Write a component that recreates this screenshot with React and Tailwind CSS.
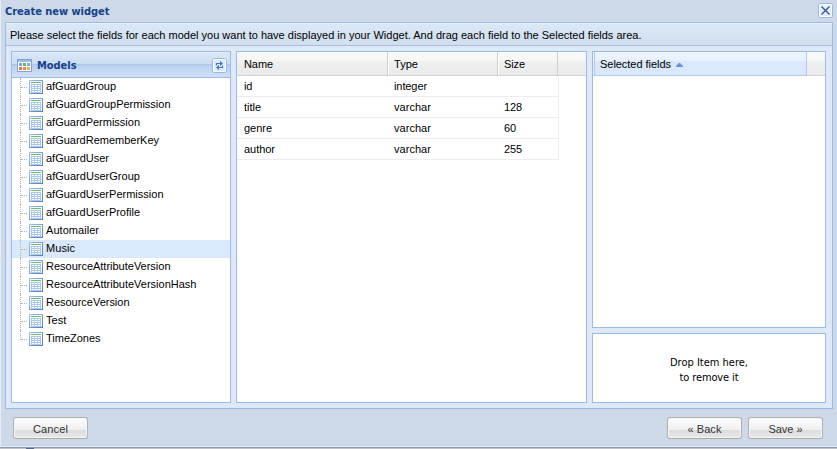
import React from 'react';

const models = [
  ['afGuardGroup', 70], ['afGuardGroupPermission', 124.5], ['afGuardPermission', 94], ['afGuardRememberKey', 113],
  ['afGuardUser', 63], ['afGuardUserGroup', 94], ['afGuardUserPermission', 117.5], ['afGuardUserProfile', 94],
  ['Automailer', 53], ['Music', 29], ['ResourceAttributeVersion', 124.5], ['ResourceAttributeVersionHash', 150.5],
  ['ResourceVersion', 83.5], ['Test', 20.5], ['TimeZones', 54.5],
];

const fields = [
  ['id', 'integer', ''],
  ['title', 'varchar', '128'],
  ['genre', 'varchar', '60'],
  ['author', 'varchar', '255'],
];

// Single line of text fitted to a known width.
function Label({ children, w, className = '' }) {
  const ref = React.useRef(null);
  React.useLayoutEffect(() => {
    const el = ref.current;
    el.style.letterSpacing = '0px';
    const width = el.getBoundingClientRect().width;
    el.style.letterSpacing = `${(w - width) / el.textContent.length}px`;
  }, [w]);
  return <span ref={ref} className={`inline-block whitespace-pre ${className}`}>{children}</span>;
}

function TableIcon() {
  return (
    <svg width="14" height="14" viewBox="0 0 14 14" shapeRendering="crispEdges" className="shrink-0">
      <defs>
        <linearGradient id="frame" x1="0" y1="0" x2="1" y2="1">
          <stop offset="0" stopColor="#a3c3e8" />
          <stop offset="1" stopColor="#4c7dbd" />
        </linearGradient>
      </defs>
      <rect width="14" height="14" fill="url(#frame)" />
      <rect x="1" y="1" width="12" height="12" fill="#f5faff" />
      <rect x="2" y="2" width="10" height="1" fill="#76b968" />
      <rect x="2" y="4" width="10" height="9" fill="#a9c6ea" />
      <path d="M3 5.5h8M3 7.5h8M3 9.5h8M3 11.5h8" stroke="#fff" />
      <path d="M5.5 4v9M8.5 4v9" stroke="#b4cdec" />
    </svg>
  );
}

function ModelsIcon() {
  return (
    <svg width="15" height="13" viewBox="0 0 15 13" shapeRendering="crispEdges" className="shrink-0">
      <rect width="15" height="13" fill="#7fa3cd" />
      <rect x="1" y="1" width="13" height="2" fill="#9dbde2" />
      <rect x="1" y="3" width="13" height="9" fill="#fff" />
      <rect x="2" y="4" width="3" height="3" fill="#7ba9e0" />
      <rect x="6" y="4" width="3" height="3" fill="#6db65f" />
      <rect x="10" y="4" width="3" height="3" fill="#7ba9e0" />
      <rect x="2" y="8" width="3" height="3" fill="#df7264" />
      <rect x="6" y="8" width="3" height="3" fill="#f38b35" />
      <rect x="10" y="8" width="3" height="3" fill="#eab546" />
    </svg>
  );
}

function RefreshTool() {
  return (
    <svg width="15" height="15" viewBox="0 0 15 15">
      <rect x=".5" y=".5" width="14" height="14" rx="2" fill="#eaf4ff" stroke="#93b9e6" />
      <rect x="1.5" y="1.5" width="12" height="12" rx="1" fill="#dcebfc" stroke="#fff" />
      <path d="M4.500 7.500V5.500H8M10.500 7.500v2H7" fill="none" stroke="#4778b5" strokeWidth="1.200" />
      <path d="M8 3v5l3-2.500zM7 7v5L4 9.500z" fill="#4778b5" />
    </svg>
  );
}

function CloseTool() {
  return (
    <svg width="15" height="15" viewBox="0 0 15 15">
      <rect x=".5" y=".5" width="14" height="14" rx="2" fill="#eaf4ff" stroke="#93b9e6" />
      <rect x="1.5" y="1.5" width="12" height="12" rx="1" fill="#e3effc" stroke="#fff" />
      <path d="M3.500 3.500l8 8M11.500 3.500l-8 8" stroke="#34579f" strokeWidth="1.400" />
    </svg>
  );
}

function TreeRow({ name, w, selected, last }) {
  return (
    <div className={`flex h-[18px] pl-[8px] ${selected ? 'bg-[#d9e8fb]' : ''}`}>
      <div className={`w-px border-l border-dotted border-[#b5b5b5] ${last ? 'h-[10px]' : 'h-[18px]'}`} />
      <div className="mt-[9px] h-px w-[6px] border-t border-dotted border-[#b5b5b5]" />
      <div className="ml-[2px] mt-[2px] h-[14px] w-[14px]"><TableIcon /></div>
      <div className="ml-[3px] leading-[17px]"><Label w={w}>{name}</Label></div>
    </div>
  );
}

function PushButton({ children, w }) {
  return (
    <button className="flex h-[22px] w-[75px] items-center justify-center rounded-[3px] border border-[#b0b0b0] border-b-[#a8a8a8] bg-[linear-gradient(#fdfdfd_0%,#efefef_58%,#dcdcdc_60%,#e8e8e8_100%)] pt-[2px] text-[#333] shadow-[inset_0_0_0_1px_#f6f6f6]">
      <Label w={w}>{children}</Label>
    </button>
  );
}

const headCell = 'h-full border-r border-[#cecece] leading-[25px]';

export default function App() {
  return (
    <div className="flex h-[449px] w-[837px] flex-col overflow-hidden bg-[#cdd9e8] font-['Liberation_Sans',Arial,sans-serif] text-[11px] text-black">
      <div className="flex h-[446px] flex-col border-l border-[#e4edf7] pl-[4px] pr-[4px]">
        <header className="flex h-[22px] shrink-0 justify-between pt-[3px]">
          <h1 className="font-['DejaVu_Sans_Condensed','DejaVu_Sans',sans-serif] text-[11px] font-bold leading-[18px] text-[#15428b]">
            <Label w={104.5}>Create new widget</Label>
          </h1>
          <CloseTool />
        </header>

        <main className="flex h-[387px] w-[828px] shrink-0 flex-col border border-[#99bbe8] bg-[#dfe8f6]">
          <div className="h-[23px] shrink-0 border-b border-t border-b-[#a2bfe2] border-t-[#e9f2fc] bg-[linear-gradient(#dbe7f5,#d0deef)] pl-[4px] leading-[23px]">
            <Label w={631.5}>Please select the fields for each model you want to have displayed in your Widget. And drag each field to the Selected fields area.</Label>
          </div>

          <div className="flex flex-1 gap-[5px] px-[5px] py-[5px]">
            <section className="h-[352px] w-[220px] border border-[#99bbe8] bg-white">
              <div className="flex h-[26px] items-center border-b border-t border-b-[#99bbe8] border-t-[#e4eefa] bg-[linear-gradient(#dbe7f6_0%,#cbdcf2_46%,#a9c6ec_47%,#bcd2f0_54%,#d0e0f5_100%)] pl-[5px] pr-[3px]">
                <div className="mt-px flex"><ModelsIcon /></div>
                <h2 className="ml-[5px] mt-[2px] flex-1 font-['DejaVu_Sans_Condensed','DejaVu_Sans',sans-serif] text-[11px] font-bold leading-[16px] text-[#15428b]"><Label w={39.5}>Models</Label></h2>
                <div className="flex"><RefreshTool /></div>
              </div>
              {models.map(([name, w], i) => (
                <TreeRow key={name} name={name} w={w} selected={name === 'Music'} last={i === models.length - 1} />
              ))}
            </section>

            <section className="h-[352px] w-[351px] border border-[#99bbe8] bg-white">
              <div className="flex h-[24px] border-b border-[#d0d0d0] bg-[linear-gradient(#fafafa_0%,#f5f5f5_38%,#f0f0f1_40%,#e9eaeb_100%)]">
                <div className={`w-[151px] pl-[7px] ${headCell}`}><Label w={29}>Name</Label></div>
                <div className={`w-[110px] border-l border-l-white pl-[5px] ${headCell}`}><Label w={24}>Type</Label></div>
                <div className={`w-[60px] border-l border-l-white pl-[5px] ${headCell}`}><Label w={21}>Size</Label></div>
              </div>
              {fields.map(([name, type, size]) => (
                <div key={name} className="flex h-[21px] w-[322px] border-b border-r border-[#ededed] leading-[21px]">
                  <div className="w-[157px] pl-[7px]"><Label w={name === 'id' ? 8 : name === 'title' ? 17 : name === 'genre' ? 28 : 31}>{name}</Label></div>
                  <div className="w-[110px]"><Label w={type === 'integer' ? 33 : 37}>{type}</Label></div>
                  <div>{size && <Label w={size.length * 6}>{size}</Label>}</div>
                </div>
              ))}
            </section>

            <div className="flex w-[234px] flex-col gap-[5px]">
              <section className="h-[277px] border border-[#99bbe8] bg-white">
                <div className="flex h-[24px] border-b border-[#d0d0d0] bg-[linear-gradient(#fafafa_0%,#f5f5f5_38%,#f0f0f1_40%,#e9eaeb_100%)]">
                  <div className="ml-px flex h-[24px] w-[213px] items-center border-b border-l border-r border-[#aaccf6] bg-[linear-gradient(#edf5fe_0%,#e6f1fd_39%,#d9e8fb_40%,#d9e8fb_100%)] pl-[5px] pt-[2px]">
                    <Label w={71}>Selected fields</Label>
                    <svg width="7" height="4" viewBox="0 0 7 4" className="ml-[5px] mt-px"><path d="M3 0h1L7 3v1H0V3z" fill="#6593cf" /></svg>
                  </div>
                </div>
              </section>
              <section className="flex h-[70px] flex-col items-center justify-center border border-[#99bbe8] bg-white pt-[3px] font-['DejaVu_Sans_Condensed','DejaVu_Sans',sans-serif] leading-[15px]">
                <Label w={78}>Drop Item here,</Label>
                <Label w={59}>to remove it</Label>
              </section>
            </div>
          </div>
        </main>

        <footer className="flex pl-[8px] pr-[10px] pt-[8px]">
          <PushButton w={35}>Cancel</PushButton>
          <div className="ml-auto flex gap-[6px]">
            <PushButton w={34}>« Back</PushButton>
            <PushButton w={34}>Save »</PushButton>
          </div>
        </footer>
      </div>
      <div className="h-px bg-[#e1eaf4]" />
      <div className="h-px bg-[#929eaf]" />
      <div className="flex h-px bg-[#bfc3c8]"><div className="ml-[26px] w-[8px] bg-[#53688b]" /></div>
    </div>
  );
}
